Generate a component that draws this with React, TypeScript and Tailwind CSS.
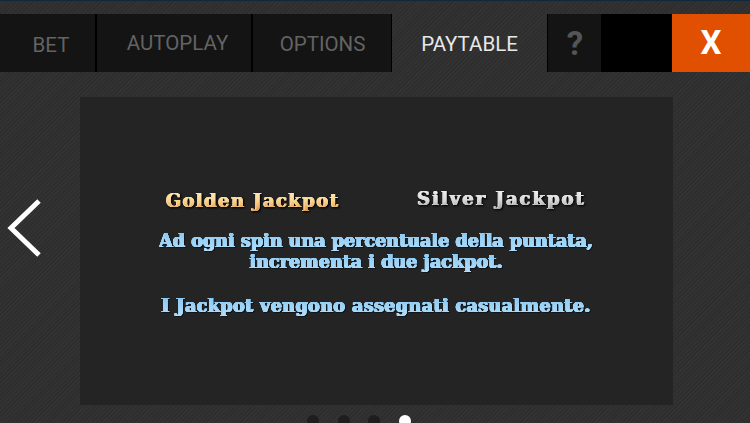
const slab = "font-['DejaVu_Serif',serif] font-bold whitespace-nowrap";
const blue = `${slab} bg-gradient-to-b from-[#7fc4f2] to-[#b9e0f9] bg-clip-text text-transparent [filter:drop-shadow(0.7px_0_0_#9fd5f7)_drop-shadow(-0.5px_0_0_#9fd5f7)_drop-shadow(0_0.4px_0_#9fd5f7)_drop-shadow(1px_1px_0px_#10161c)]`;

function Tab({ label, className }: { label: string; className: string }) {
  return (
    <div className={`flex h-full shrink-0 items-center justify-center ${className}`}>
      <span>{label}</span>
    </div>
  );
}

export default function App() {
  return (
    <div className="relative flex h-[423px] w-[750px] flex-col overflow-hidden bg-[#2f2f2f] bg-[repeating-linear-gradient(135deg,#2d2d2d_0px,#2d2d2d_1px,#333333_2px,#333333_3px)] font-['Roboto',sans-serif]">
      <div className="h-px shrink-0 bg-[#10283c]" />
      <div className="mt-[13px] flex h-[58px] shrink-0 items-stretch text-[20.5px] text-[#636363]">
        <Tab label="BET" className="w-[97px] border-r-2 border-black bg-[#141414] pt-[4px] pl-[7px]" />
        <Tab label="AUTOPLAY" className="w-[156px] border-r-2 border-black bg-[#141414] pt-[1px] pl-[7px]" />
        <Tab label="OPTIONS" className="w-[139px] border-r-[1px] border-black bg-[#141414] pt-[2px] pl-[1px]" />
        <Tab label="PAYTABLE" className="w-[155px] pt-[2px] text-[#e8e8e8]" />
        <Tab label="?" className="w-[54px] border-l-[1px] border-black bg-[#141414] pt-[2px] pl-[1px] text-[33px] font-bold text-[#555555]" />
        <div className="w-[71px] shrink-0 bg-black" />
        <Tab label="X" className="w-[78px] bg-[#e05000] pb-[1px] text-[33px] font-bold text-white" />
      </div>
      <div className="mt-[25px] flex shrink-0 items-start">
        <div className="mt-[102px] flex w-[80px] shrink-0 justify-start pl-[7px]">
          <svg width="34" height="58" viewBox="0 0 34 58" fill="none">
            <path d="M32 2 L4 29 L32 56" stroke="#ffffff" strokeWidth="5" />
          </svg>
        </div>
        <div className="flex h-[308px] w-[593px] shrink-0 flex-col items-center bg-[#242424] pt-[90px]">
          <div className="flex w-full text-[18px]">
            <div className="flex w-[346px] justify-center">
              <span className={`${slab} bg-gradient-to-b from-[#fff6d6] via-[#fcd58e] to-[#d98a3f] bg-clip-text text-transparent tracking-[1.4px] [filter:drop-shadow(0.7px_0_0_#f8d8a0)_drop-shadow(-0.5px_0_0_#f8d8a0)_drop-shadow(1px_1px_1px_#000000)]`}>Golden Jackpot</span>
            </div>
            <div className="-mt-[2px] flex w-[152px] justify-center">
              <span className={`${slab} bg-gradient-to-b from-[#ffffff] via-[#dcdcdc] to-[#858585] bg-clip-text text-transparent tracking-[2px] [filter:drop-shadow(0.7px_0_0_#d8d8d8)_drop-shadow(-0.5px_0_0_#d8d8d8)_drop-shadow(1px_1px_1px_#000000)]`}>Silver Jackpot</span>
            </div>
          </div>
          <div className="mt-[16px] flex flex-col items-center text-[17.6px] leading-[22px]">
            <span className={blue}>Ad ogni spin una percentuale della puntata,</span>
            <span className={`${blue} -mt-px`}>incrementa i due jackpot.</span>
            <span className={`${blue} mt-[22px] tracking-[0.37px]`}>I Jackpot vengono assegnati casualmente.</span>
          </div>
        </div>
      </div>
      <div className="mt-[10px] flex shrink-0 gap-[18.5px] pl-[307px]">
        <div className="size-[12px] rounded-full bg-[#1e1e1e]" />
        <div className="size-[12px] rounded-full bg-[#1e1e1e]" />
        <div className="size-[12px] rounded-full bg-[#1e1e1e]" />
        <div className="size-[12px] rounded-full bg-white" />
      </div>
    </div>
  );
}
